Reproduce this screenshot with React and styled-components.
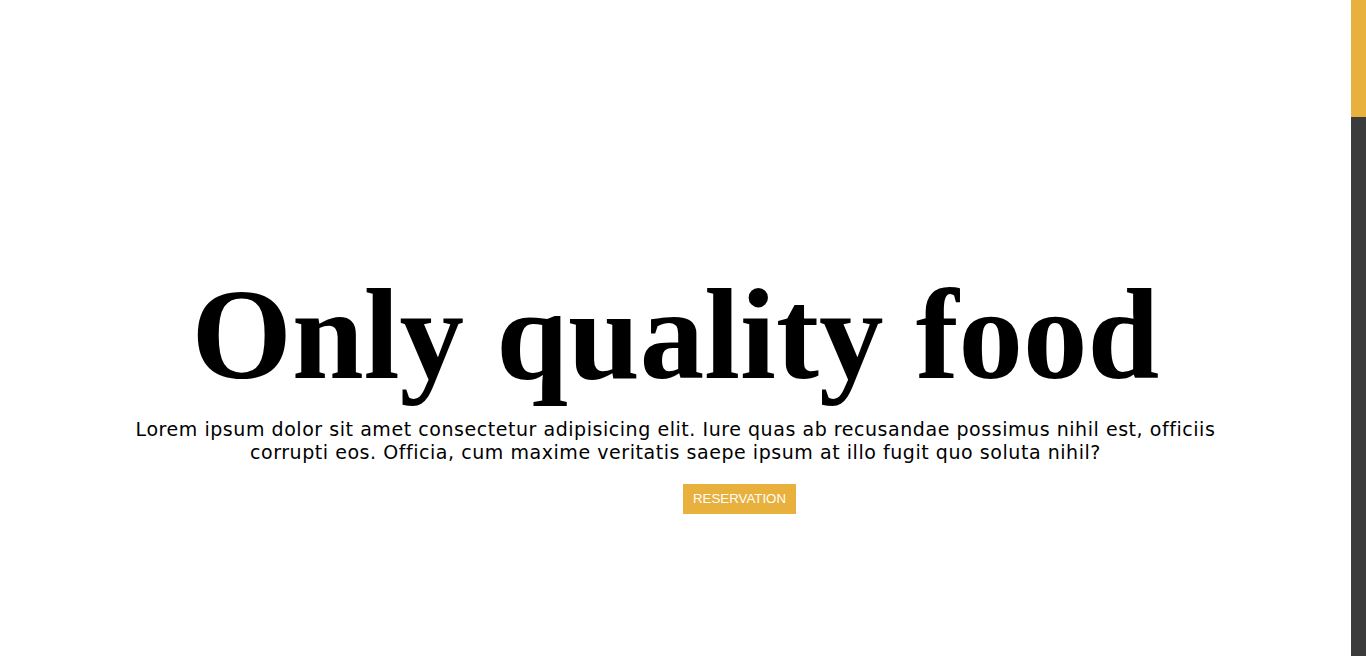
import React from 'react';
import styled, { createGlobalStyle } from 'styled-components';

const GlobalStyle = createGlobalStyle`
  * {
    box-sizing: border-box;
  }
  html,
  body {
    margin: 0;
    padding: 0;
    overflow: hidden;
  }
  body {
    background: #fff;
    color: #000;
    font-family: 'DejaVu Sans', Verdana, sans-serif;
  }
`;

const StyledLayout = styled.div`
  display: flex;
  height: 100vh;
`;
const StyledMain = styled.main`
  flex: 1;
  overflow: hidden;
`;
// painted stand-in for the styled page scrollbar
const StyledTrack = styled.div`
  width: 15px;
  flex-shrink: 0;
  background: #3b3b3b;
`;
const StyledThumb = styled.div`
  height: 117px;
  background: #e8b03c;
`;
const StyledHero = styled.section`
  height: 656px;
  display: flex;
  flex-direction: column;
  align-items: center;
  padding-top: 258px;
  text-align: center;
`;
const StyledTitle = styled.h1`
  margin: 0;
  font-family: 'Liberation Serif', Georgia, serif;
  font-weight: 700;
  font-size: 129px;
  line-height: 154px;
`;
const StyledText = styled.p`
  margin: 6px 0 0;
  max-width: 1100px;
  font-size: 19px;
  line-height: 23px;
  letter-spacing: 0.55px;
`;
const StyledButton = styled.a`
  display: inline-block;
  margin: 20px 0 0 128px;
  padding: 8px 10px;
  background: #e8b03c;
  color: #fff;
  font-family: 'Liberation Sans', Arial, sans-serif;
  font-size: 13.3px;
  line-height: 14px;
  text-decoration: none;
  text-transform: uppercase;
`;

export default function App() {
  return (
    <StyledLayout>
      <GlobalStyle />
      <StyledMain>
        <StyledHero>
          <StyledTitle>Only quality food</StyledTitle>
          <StyledText>
            Lorem ipsum dolor sit amet consectetur adipisicing elit. Iure quas ab recusandae possimus
            nihil est, officiis corrupti eos. Officia, cum maxime veritatis saepe ipsum at illo fugit quo
            soluta nihil?
          </StyledText>
          <StyledButton href="#!">Reservation</StyledButton>
        </StyledHero>
      </StyledMain>
      <StyledTrack>
        <StyledThumb />
      </StyledTrack>
    </StyledLayout>
  );
}
